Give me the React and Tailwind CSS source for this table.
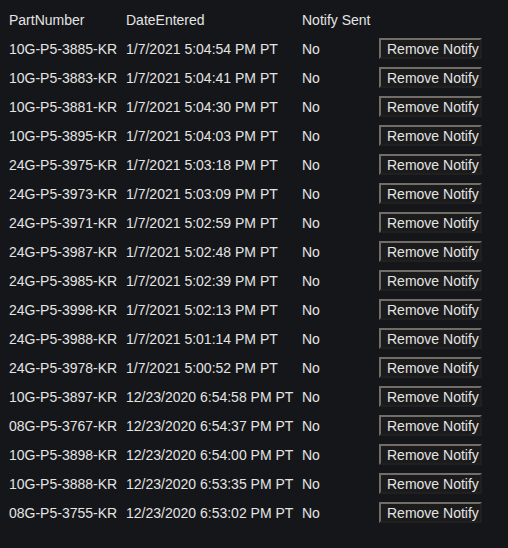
import React from 'react';

const rows = [
  ['10G-P5-3885-KR', '1/7/2021 5:04:54 PM PT'],
  ['10G-P5-3883-KR', '1/7/2021 5:04:41 PM PT'],
  ['10G-P5-3881-KR', '1/7/2021 5:04:30 PM PT'],
  ['10G-P5-3895-KR', '1/7/2021 5:04:03 PM PT'],
  ['24G-P5-3975-KR', '1/7/2021 5:03:18 PM PT'],
  ['24G-P5-3973-KR', '1/7/2021 5:03:09 PM PT'],
  ['24G-P5-3971-KR', '1/7/2021 5:02:59 PM PT'],
  ['24G-P5-3987-KR', '1/7/2021 5:02:48 PM PT'],
  ['24G-P5-3985-KR', '1/7/2021 5:02:39 PM PT'],
  ['24G-P5-3998-KR', '1/7/2021 5:02:13 PM PT'],
  ['24G-P5-3988-KR', '1/7/2021 5:01:14 PM PT'],
  ['24G-P5-3978-KR', '1/7/2021 5:00:52 PM PT'],
  ['10G-P5-3897-KR', '12/23/2020 6:54:58 PM PT'],
  ['08G-P5-3767-KR', '12/23/2020 6:54:37 PM PT'],
  ['10G-P5-3898-KR', '12/23/2020 6:54:00 PM PT'],
  ['10G-P5-3888-KR', '12/23/2020 6:53:35 PM PT'],
  ['08G-P5-3755-KR', '12/23/2020 6:53:02 PM PT'],
];

export default function App() {
  return (
    <div className="min-h-[548px] bg-[#151619] text-[#e4e4e4] text-[14px] leading-4 font-['Liberation_Sans',Arial,sans-serif] pt-[6px] pl-[9px]">
      {/* header */}
      <div className="flex h-[28px] items-center">
        <div className="w-[117px]">PartNumber</div>
        <div className="w-[176px]">DateEntered</div>
        <div className="w-[77px]">Notify Sent</div>
      </div>

      {rows.map(([part, date]) => (
        <div key={part} className="flex h-[29px] items-center">
          <div className="w-[117px] whitespace-nowrap">{part}</div>
          <div className="w-[176px] whitespace-nowrap">{date}</div>
          <div className="w-[77px]">No</div>
          <button
            type="button"
            className="w-[103px] h-[21px] pl-[6px] text-left whitespace-nowrap bg-[#1b1b1c] text-[#e4e4e4] border-2 border-t-[#736d67] border-l-[#736d67] border-r-[#202020] border-b-[#202020]"
          >
            Remove Notify
          </button>
        </div>
      ))}
    </div>
  );
}
